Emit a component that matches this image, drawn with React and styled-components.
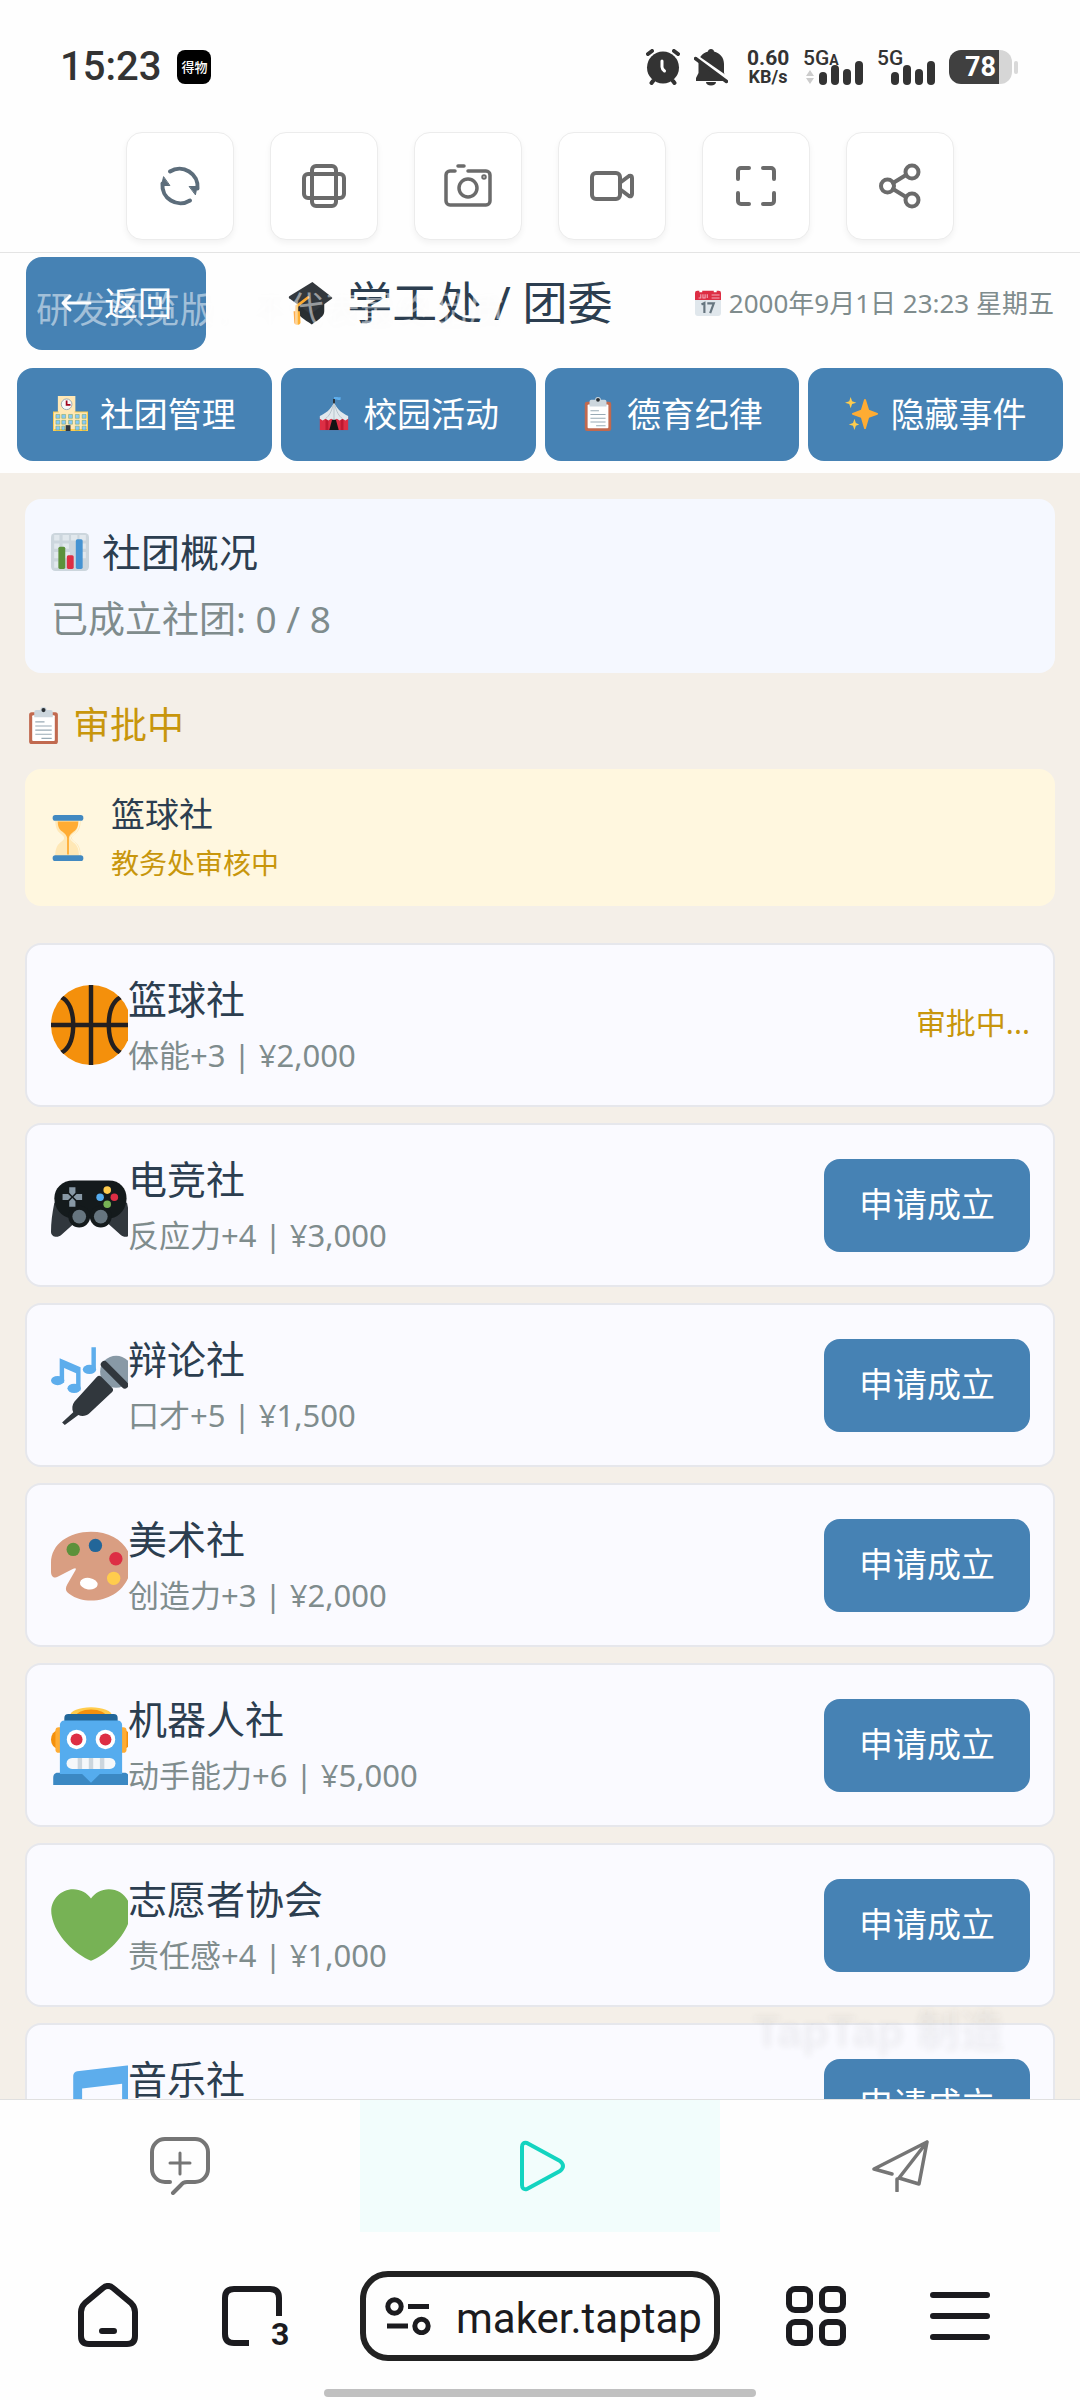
import React from 'react';
import styled, { createGlobalStyle } from 'styled-components';

const GlobalStyle = createGlobalStyle`
  *, *::before, *::after { box-sizing: border-box; }
  body { margin: 0; background: #fff; }
  button, input { font: inherit; }
  button { margin: 0; padding: 0; border: 0; background: none; color: inherit; cursor: pointer; }
  h1, h2, h3, p { margin: 0; font-weight: 400; }
  svg { display: block; flex: none; }
`;

const cjk = '"Noto Sans", "Noto Sans CJK SC", sans-serif';
const latin = 'Roboto, "Noto Sans CJK SC", sans-serif';

const Page = styled.div`
  display: flex;
  flex-direction: column;
  height: 100vh;
  overflow: hidden;
  background: #fefefe;
  font-family: ${cjk};
`;

/* ---------- system status bar ---------- */

const StatusBar = styled.div`
  display: flex;
  align-items: center;
  justify-content: space-between;
  flex: none;
  height: 132px;
  padding: 2px 62px 0 60px;
  color: #333;
  font-family: ${latin};
`;
const StatusGroup = styled.div`
  display: flex;
  align-items: center;
  gap: ${(p) => p.$gap}px;
`;
const Clock = styled.time`
  font-size: 40px;
  line-height: 44px;
  font-weight: 500;
`;
const AppBadge = styled.span`
  width: 34px;
  height: 34px;
  border-radius: 8px;
  background: #000;
  color: #fff;
  font: 500 13px/34px ${cjk};
  text-align: center;
`;
const Speed = styled.div`
  width: 42px;
  margin-left: 5px;
  text-align: center;
  font-weight: 700;
  font-size: 18px;
  line-height: 18px;
`;
const SpeedValue = styled.div`
  font-size: 21px;
  line-height: 19px;
`;
const Signal = styled.div`
  position: relative;
  width: ${(p) => p.$width}px;
  height: 36px;
`;
const SignalName = styled.span`
  position: absolute;
  top: -2px;
  left: 0;
  font-size: 21px;
  line-height: 22px;
  font-weight: 500;
  small { font-size: 14px; font-weight: 700; }
`;
const SignalBars = styled.svg`
  position: absolute;
  right: 0;
  bottom: 0;
`;
const Battery = styled.div`
  display: flex;
  align-items: center;
  gap: 2px;
  &::after {
    content: '';
    width: 4px;
    height: 13px;
    border-radius: 2px;
    background: #d9d9d9;
  }
`;
const BatteryBody = styled.span`
  width: 63px;
  height: 34px;
  padding-left: 16px;
  border-radius: 12px;
  background: linear-gradient(90deg, #404040 50px, #d6d6d6 50px);
  color: #fff;
  font-size: 27px;
  line-height: 34px;
  font-weight: 700;
`;

/* ---------- tool strip ---------- */

const Toolbar = styled.div`
  display: flex;
  justify-content: center;
  gap: 36px;
  flex: none;
  padding-bottom: 12px;
  border-bottom: 1px solid #e4e4e4;
`;
const ToolButton = styled.button`
  display: grid;
  place-items: center;
  width: 108px;
  height: 108px;
  border: 1px solid #ececec;
  border-radius: 16px;
  background: #fff;
  box-shadow: 0 3px 6px rgba(0, 0, 0, 0.05);
  color: ${(p) => p.$color || '#6b6b6b'};
`;

/* ---------- game screen ---------- */

const Game = styled.main`
  position: relative;
  display: flex;
  flex-direction: column;
  flex: 1;
  min-height: 0;
  background: #f4efe8;
`;
const GameHeader = styled.header`
  flex: none;
  padding-bottom: 12px;
  background: #fefefe;
`;
const TitleRow = styled.div`
  display: flex;
  align-items: center;
  justify-content: space-between;
  padding: 4px 26px 18px;
`;
const BlueButton = styled.button`
  display: flex;
  align-items: center;
  justify-content: center;
  gap: 12px;
  height: 93px;
  padding-bottom: 2px;
  border-radius: 16px;
  background: #4682b4;
  color: #fff;
  font-size: 34px;
  line-height: 48px;
`;
const BackButton = styled(BlueButton)`
  width: 180px;
`;
const ApplyButton = styled(BlueButton)`
  width: 206px;
  flex: none;
`;
const Title = styled.h1`
  display: flex;
  align-items: center;
  gap: 14px;
  padding-bottom: 2px;
  color: #2c3e50;
  font-size: 45px;
  line-height: 60px;
`;
const DateText = styled.div`
  display: flex;
  align-items: center;
  gap: 8px;
  padding-bottom: 2px;
  color: #7f8c8d;
  font-size: 26px;
  line-height: 36px;
`;
const Nav = styled.nav`
  display: grid;
  grid-template-columns: repeat(4, 1fr);
  gap: 9px;
  padding: 0 17px;
`;
const Scroll = styled.div`
  flex: 1;
  min-height: 0;
  overflow-y: auto;
  scrollbar-width: none;
  padding: 26px 25px 0;
`;
const Summary = styled.section`
  padding: 25px 26px;
  height: 174px;
  border-radius: 16px;
  background: #f5f8ff;
`;
const SummaryTitle = styled.h2`
  display: flex;
  align-items: center;
  gap: 13px;
  color: #2c3e50;
  font-size: 39px;
  line-height: 56px;
`;
const SummaryText = styled.p`
  margin-top: 12px;
  color: #7f8c8d;
  font-size: 37px;
  line-height: 54px;
`;
const SectionTitle = styled.h2`
  display: flex;
  align-items: center;
  gap: 11px;
  margin: 28px 0 20px;
  color: #c8960c;
  font-size: 37px;
  line-height: 48px;
`;
const Pending = styled.section`
  display: flex;
  align-items: center;
  gap: 26px;
  height: 137px;
  margin-bottom: 37px;
  padding: 0 26px;
  border-radius: 16px;
  background: #fff7df;
`;
const PendingName = styled.h3`
  color: #2c3e50;
  font-size: 34px;
  line-height: 50px;
`;
const PendingState = styled.p`
  color: #c8960c;
  font-size: 28px;
  line-height: 48px;
`;
const ClubList = styled.ul`
  display: grid;
  gap: 16px;
  margin: 0;
  padding: 0;
  list-style: none;
`;
const Club = styled.li`
  display: flex;
  align-items: center;
  height: 164px;
  padding: 0 23px 0 24px;
  border: 2px solid #e6e7ec;
  border-radius: 16px;
  background: #fafaff;
`;
const ClubIcon = styled.div`
  flex: none;
  width: 77px;
  overflow: hidden;
`;
const ClubBody = styled.div`
  flex: 1;
  padding-top: 2px;
`;
const ClubName = styled.h3`
  color: #2c3e50;
  font-size: 39px;
  line-height: 52px;
`;
const ClubDetail = styled.p`
  min-height: 54px;
  padding-top: 6px;
  color: #7f8c8d;
  font-size: 31px;
  line-height: 48px;
`;
const ClubState = styled.span`
  padding-bottom: 4px;
  color: #c8960c;
  font-size: 30px;
  line-height: 48px;
`;
const Notice = styled.div`
  position: absolute;
  top: 30px;
  left: 36px;
  color: rgba(255, 255, 255, 0.5);
  font-size: 36px;
  line-height: 54px;
  white-space: nowrap;
  text-shadow: 0 2px 8px rgba(0, 0, 0, 0.02);
  pointer-events: none;
`;
const Brand = styled.div`
  position: absolute;
  right: 76px;
  bottom: 40px;
  color: rgba(255, 255, 255, 0.15);
  font: 700 44px/54px "Liberation Sans", ${cjk};
  text-shadow: 0 0 6px rgba(0, 0, 0, 0.06);
  pointer-events: none;
`;

/* ---------- bottom bars ---------- */

const TabBar = styled.nav`
  display: grid;
  grid-template-columns: repeat(3, 1fr);
  flex: none;
  height: 133px;
  border-top: 1px solid #e0e0e0;
`;
const TabButton = styled.button`
  display: grid;
  place-items: center;
  color: ${(p) => (p.$active ? '#14d4c0' : '#757575')};
  background: ${(p) => (p.$active ? '#f2fdfc' : 'transparent')};
`;
const BrowserBar = styled.div`
  display: flex;
  align-items: center;
  flex: none;
  padding: 39px 48px 28px 36px;
  color: #1b1b1f;
`;
const BrowserButton = styled.button`
  position: relative;
  display: grid;
  place-items: center;
  width: 144px;
  height: 90px;
`;
const TabCount = styled.span`
  position: absolute;
  left: 91px;
  top: 45px;
  font: 700 32px/36px ${latin};
`;
const Address = styled.label`
  display: flex;
  align-items: center;
  gap: 25px;
  flex: 1;
  min-width: 0;
  height: 90px;
  margin: 0 24px 0 36px;
  padding: 0 8px 0 19px;
  border: 6px solid #222;
  border-radius: 28px;
`;
const AddressInput = styled.input`
  flex: 1;
  min-width: 0;
  width: 100%;
  padding: 6px 0 0;
  border: 0;
  outline: 0;
  background: transparent;
  color: #1b1b1f;
  font: 400 42px/60px ${latin};
`;
const HomeIndicator = styled.div`
  flex: none;
  width: 40%;
  height: 8px;
  margin: 0 auto 3px;
  border-radius: 4px;
  background: #c0c0c0;
`;

/* ---------- drawings ---------- */

const Emoji = ({ size, width, box = '0 0 36 36', children }) => (
  <svg width={width || size} height={size} viewBox={box} aria-hidden="true">{children}</svg>
);

const Clipboard = ({ size }) => (
  <Emoji size={size}>
    <rect x="4" y="5" width="28" height="31" rx="2.5" fill="#c1694f" />
    <rect x="7" y="8" width="22" height="25" rx="1" fill="#fff" />
    <path fill="#ccd6dd" d="M25 3h-4a3 3 0 1 0-6 0h-4a2 2 0 0 0-2 2v5h18V5a2 2 0 0 0-2-2z" />
    <circle cx="18" cy="3" r="2" fill="#292f33" />
    <path stroke="#99aab5" strokeWidth="1.1" d="M10 14.500h9M10 18.500h16M10 22.500h16M10 26.500h16M16 30.500h10" />
  </Emoji>
);
const Cap = () => (
  <Emoji size={45}>
    <path fill="#292f33" d="M8 17v8c0 4 5 6.500 11 10.500 6-4 10-6.500 10-10.500v-8z" />
    <path fill="#33383d" d="M19.500 1.500 1 13a1 1 0 0 0 0 1.500L17 26.500a2 2 0 0 0 2 0L35 15a1 1 0 0 0 0-1.500z" />
    <path fill="none" stroke="#ffac33" strokeWidth="2.200" strokeLinecap="round" d="M16 14 7 21v6" />
    <path fill="#ffac33" d="M4.500 25h5l.5 9c0 2.500-5 2.500-5 0z" />
  </Emoji>
);
const Calendar = () => (
  <Emoji size={26}>
    <path fill="#e0e7ec" d="M36 32a4 4 0 0 1-4 4H4a4 4 0 0 1-4-4V9h36z" />
    <path fill="#dd2e44" d="M0 4a3 3 0 0 1 3-3h3v2h4V1h16v2h4V1h3a3 3 0 0 1 3 3v10H0z" />
    <path stroke="#f4abba" strokeWidth="1.500" d="M5 11h3V6m3 0v5h3V6m3 0v5M23 7h11M23 11h11" fill="none" />
    <path fill="none" stroke="#66757f" strokeWidth="3" d="m9 20 4-2v14M17 18.500h9l-5 13.500" />
  </Emoji>
);
const School = () => (
  <Emoji size={35}>
    <path fill="#ffe8b6" d="M5 0h18v36H5z" />
    <path fill="#ffcc4d" d="M0 16h36v20H0z" />
    <path fill="#ffe8b6" d="M1 17h34v17H1z" />
    <path fill="#ffe8b6" d="M6 3h16v16H6z" />
    <circle cx="14" cy="8.500" r="5.500" fill="#f5f8fa" stroke="#99aab5" strokeWidth="1" />
    <path d="M14 4.500v4.500h4" stroke="#a0041e" strokeWidth="1.800" fill="none" />
    <path fill="#88c9f9" stroke="#5c913b" strokeWidth=".4" d="M3 19h4v4H3zM9 19h4v4H9zM16 19h4v4h-4zM23 19h4v4h-4zM30 19h4v4h-4zM3 25h4v4H3zM9 25h4v4H9zM16 25h4v4h-4zM23 25h4v4h-4zM30 25h4v4h-4zM3 31h4v4H3zM9 31h3v4H9zM23 31h4v4h-4zM30 31h4v4h-4z" />
    <path fill="#31373d" d="M13 30h5v6h-5z" />
  </Emoji>
);
const Tent = () => (
  <Emoji size={34}>
    <path fill="#5dadec" d="M18 0c3-1 4 1 7 0v3c-3 1-4-1-7 0z" />
    <path stroke="#292f33" strokeWidth="2" d="M18 2v6" />
    <path fill="#dd2e44" d="M3 22h30v13H3z" />
    <path fill="#be1931" d="M9 23h3v12H9zM25 23h3v12h-3z" />
    <path fill="#e1e8ed" d="M18 6C14 14 9 17 3 20v3l3 2 3-2 3 2 3-2 3 2 3-2 3 2 3-2 3 2 3-2v-3C27 17 22 14 18 6z" />
    <path fill="none" stroke="#aab8c2" strokeWidth=".8" d="M18 7v17M17 9c-2 7-4 11-8 14M19 9c2 7 4 11 8 14" />
    <path fill="#141414" d="M16 24h4l3 11H13z" />
  </Emoji>
);
const Sparkles = () => (
  <Emoji size={34}>
    <path fill="#ffac33" d="M34.347 16.893l-8.899-3.294-3.323-10.891c-.128-.42-.517-.708-.956-.708-.439 0-.828.288-.956.708l-3.322 10.891-8.900 3.294c-.393.146-.653.519-.653.938 0 .418.260.793.653.938l8.895 3.293 3.324 11.223c.126.424.516.715.959.715.442 0 .833-.291.959-.716l3.324-11.223 8.896-3.293c.391-.144.652-.518.652-.937 0-.418-.261-.792-.653-.938z" />
    <path fill="#ffcc4d" d="m6 0 1.500 4.500L12 6 7.500 7.500 6 12 4.500 7.500 0 6l4.500-1.500zM10 23l1.500 4.500L15 29l-3.500 1.500L10 35l-1.500-4.500L4 29l4.500-1.500z" />
  </Emoji>
);
const Chart = () => (
  <Emoji size={38}>
    <rect width="36" height="36" rx="4" fill="#ccd6dd" />
    <path fill="#e1e8ed" d="M3 2h5v5H3zM11 2h6v5h-6zM19 2h6v5h-6zM27 2h6v5h-6zM3 10h5v5H3zM11 10h6v5h-6zM27 10h6v5h-6zM3 18h5v6H3zM13 18h5v6h-5zM29 18h4v6h-4zM3 27h4v6H3z" />
    <rect x="7" y="13" width="6.500" height="21" rx="1.500" fill="#5c913b" />
    <rect x="15" y="21" width="6.500" height="13" rx="1.500" fill="#dd2e44" />
    <rect x="23.500" y="6" width="6.500" height="28" rx="1.500" fill="#4593d2" />
  </Emoji>
);
const Hourglass = () => (
  <Emoji size={46} width={34} box="4.700 0 26.600 36">
    <path fill="#ffe8b6" d="M8 3h20c0 6-1 9-4 11.500-2 1.500-3 2.500-3 3.500s1 2 3 3.500c3 2.500 4 5.500 4 11.500H8c0-6 1-9 4-11.500 2-1.500 3-2.500 3-3.500s-1-2-3-3.500C9 12 8 9 8 3z" />
    <path fill="#ffac33" d="M10 5h16c0 4-1 6-3.500 8S19 16 18.700 18v13h-1.400V18c-.3-2-1.300-3-3.800-5S10 9 10 5z" />
    <path fill="none" stroke="#fff7df" strokeWidth=".8" d="M27 4c0 5-1 8-4 10.500-2 1.500-3 2.500-3 3.500s1 2 3 3.500c3 2.500 4 5.500 4 10" />
    <rect x="6" y="0" width="24" height="4.500" rx="2" fill="#4289c1" />
    <rect x="6" y="31.500" width="24" height="4.500" rx="2" fill="#4289c1" />
  </Emoji>
);

const Basketball = () => (
  <Emoji size={80}>
    <circle cx="18" cy="18" r="18" fill="#f4900c" />
    <path fill="#231f20" d="M36 17h-8.981c.188-5.506 1.943-9.295 4.784-10.546-.445-.531-.926-1.027-1.428-1.504-2.830 1.578-5.145 5.273-5.354 12.050H19V0h-2v17h-6.021C10.770 10.223 8.456 6.528 5.625 4.950c-.502.476-.984.972-1.428 1.503C7.039 7.705 8.793 11.494 8.981 17H0v2h8.981c-.188 5.506-1.942 9.295-4.784 10.546.445.531.926 1.027 1.428 1.504 2.831-1.578 5.145-5.273 5.354-12.050H17v17h2V19h6.021c.209 6.776 2.523 10.471 5.354 12.050.502-.476.984-.973 1.428-1.504-2.841-1.251-4.596-5.040-4.784-10.546H36v-2z" />
  </Emoji>
);
const Gamepad = () => (
  <Emoji size={80}>
    <path fill="#31373d" d="M1.500 17C.5 22 0 26 0 30c0 2.400 3 3 4.600 1.500L13 24V15zM34.200 17c1 5 1.800 9 1.800 13 0 2.400-3 3-4.600 1.500L23 24V15z" />
    <path fill="#141a1c" d="M10 7h16c5 0 8 3.500 8 8 0 4.600-3 8.400-7 9H9c-4.500-.6-7.500-4.400-7.500-9 0-4.500 3.500-8 8.500-8z" />
    <circle cx="12.700" cy="23.200" r="4.900" fill="#141a1c" />
    <circle cx="22.400" cy="23.200" r="4.900" fill="#141a1c" />
    <circle cx="12.700" cy="23.200" r="3.100" fill="#66757f" />
    <circle cx="22.400" cy="23.200" r="3.100" fill="#66757f" />
    <path fill="#8899a6" d="M8.200 10h2.800v2.500l-1.400 1.400-1.400-1.400zM8.200 18.800H11v-2.500l-1.400-1.400-1.400 1.400zM5.200 13v2.800h2.500l1.400-1.400L7.700 13zM14 13v2.800h-2.500l-1.400-1.400 1.400-1.400z" />
    <circle cx="25.300" cy="11.300" r="1.700" fill="#ffcc4d" />
    <circle cx="22.100" cy="14.500" r="1.700" fill="#55acee" />
    <circle cx="28.500" cy="14.500" r="1.700" fill="#dd2e44" />
    <circle cx="25.300" cy="17.700" r="1.700" fill="#77b255" />
  </Emoji>
);
const Microphone = () => (
  <Emoji size={80}>
    <g fill="#5dadec">
      <path d="M18.200 1h2v10.500h-2zM3.900 6l9.400 4v10.500h-2v-7.800l-5.400-2.300V17h-2z" />
      <ellipse cx="17.300" cy="11" rx="3" ry="2.100" />
      <ellipse cx="3" cy="16" rx="3" ry="2.100" />
      <ellipse cx="10.400" cy="19.500" rx="3" ry="2.100" />
    </g>
    <circle cx="29.300" cy="12" r="7.200" fill="#8899a6" />
    <path stroke="#31373d" strokeWidth="3.200" strokeLinecap="round" d="m24 8.800 9.200 9.200" />
    <path fill="#31373d" d="M20.700 14.300c.6-.6 1.300-.6 1.900 0l4.900 4.900c.6.600.6 1.300 0 1.900l-10.200 9.600c-1.400 1.300-3.400 1.600-5 .8L6.200 36l-1.200-1.100 5-4.600c-.7-1.600-.5-3.500.6-4.900z" />
  </Emoji>
);
const Palette = () => (
  <Emoji size={80}>
    <path fill="#d99e82" d="M18 3C8 3 0 8.600 0 17v4c0 2.200 1.500 3.200 3 2.300l7-3.600c1-.5 1.500-.2 1 .7l-3.700 6.400c-1 1.800-.8 3.200 1 4.200C11 33 14.500 34 18 34c10 0 18-7 18-16.500C36 9 28 3 18 3z" />
    <ellipse cx="17" cy="26.400" rx="4" ry="2.600" transform="rotate(8 17 26.400)" fill="#fff" />
    <circle cx="10" cy="11" r="3" fill="#5c913b" />
    <circle cx="20" cy="9.200" r="3" fill="#226699" />
    <circle cx="29.200" cy="15.200" r="3" fill="#dd2e44" />
    <circle cx="28.200" cy="24" r="3" fill="#ffcc4d" />
  </Emoji>
);
const Robot = () => (
  <Emoji size={80}>
    <ellipse cx="18" cy="5" rx="9.500" ry="4" fill="#ffcc4d" />
    <ellipse cx="18" cy="5.500" rx="7" ry="3.500" fill="#f4900c" />
    <ellipse cx="3" cy="15.500" rx="3" ry="4" fill="#f4900c" />
    <ellipse cx="33" cy="15.500" rx="3" ry="4" fill="#f4900c" />
    <rect x="2" y="10" width="4" height="11.500" rx="1.500" fill="#ffac33" />
    <rect x="30" y="10" width="4" height="11.500" rx="1.500" fill="#ffac33" />
    <rect x="6" y="4" width="24" height="8" rx="1.800" fill="#226699" />
    <path fill="#3b88c3" d="M1 33c0-1.500.5-2.500 2-2.500h30c1.500 0 2 1 2 2.500v3H1z" />
    <path fill="#55acee" d="M6 7h24a2 2 0 0 1 2 2v22h-10l-4 4-4-4H4V9a2 2 0 0 1 2-2z" />
    <circle cx="11.500" cy="15.500" r="4.400" fill="#fff" />
    <circle cx="24.500" cy="15.500" r="4.400" fill="#fff" />
    <circle cx="11.500" cy="15.500" r="2.700" fill="#dd2e44" />
    <circle cx="24.500" cy="15.500" r="2.700" fill="#dd2e44" />
    <rect x="7" y="23.800" width="22" height="5" rx="2.500" fill="#f5f8fa" />
    <path fill="#ccd6dd" d="M12 23.800h2v5h-2zM17 23.800h2v5h-2zM22 23.800h2v5h-2z" />
  </Emoji>
);
const Heart = () => (
  <Emoji size={80}>
    <path fill="#77b255" d="M35.885 11.833c0-5.450-4.418-9.868-9.867-9.868-3.308 0-6.227 1.633-8.018 4.129-1.791-2.496-4.710-4.129-8.017-4.129-5.450 0-9.868 4.417-9.868 9.868 0 .772.098 1.520.266 2.241C1.751 22.587 11.216 31.568 18 34.034c6.783-2.466 16.249-11.447 17.617-19.959.170-.721.268-1.469.268-2.242z" />
  </Emoji>
);
const Note = () => (
  <Emoji size={80}>
    <path fill="#5dadec" d="M34.209.206L11.791 2.793C10.806 2.907 10 3.811 10 4.803v18.782C9.090 23.214 8.075 23 7 23c-3.865 0-7 2.685-7 6 0 3.314 3.135 6 7 6s7-2.686 7-6V10.539l18-2.077v13.124c-.910-.372-1.925-.586-3-.586-3.865 0-7 2.685-7 6 0 3.314 3.135 6 7 6s7-2.686 7-6V1.803c0-.992-.806-1.710-1.791-1.597z" />
  </Emoji>
);

const Line = ({ w, h, sw = 3, children }) => (
  <svg width={w} height={h} viewBox={`0 0 ${w} ${h}`} fill="none" stroke="currentColor"
    strokeWidth={sw} strokeLinecap="round" strokeLinejoin="round" aria-hidden="true">{children}</svg>
);

const tools = [
  { label: '刷新', color: '#5c6d7b', icon: (
    <Line w={44} h={44} sw={4}>
      <path d="M12 7.500a18 18 0 0 1 27.500 17M32 36.500A18 18 0 0 1 4.500 19.500" />
      <path d="M31.500 22.500h7.500l-1.500 8zM5.500 13l-2 8.500h8z" fill="currentColor" strokeWidth="1" />
    </Line>) },
  { label: '旋转', icon: (
    <Line w={44} h={44} sw={4}>
      <rect x="10" y="2" width="24" height="40" rx="4" /><rect x="2" y="10" width="40" height="24" rx="4" />
    </Line>) },
  { label: '截图', icon: (
    <Line w={48} h={46} sw={3.5}>
      <path d="M11 8H6a4 4 0 0 0-4 4v26a4 4 0 0 0 4 4h36a4 4 0 0 0 4-4V12a4 4 0 0 0-4-4H24M14 3h6" />
      <circle cx="24" cy="25" r="9" /><circle cx="40" cy="14" r="1" />
    </Line>) },
  { label: '录像', icon: (
    <Line w={44} h={30} sw={4}>
      <rect x="2" y="2" width="28" height="26" rx="4" /><path d="m31 11 8-6q3-1 3 2v16q0 3-3 2l-8-6" />
    </Line>) },
  { label: '全屏', icon: (
    <Line w={42} h={42} sw={4}>
      <path d="M3 14V6a3 3 0 0 1 3-3h8M28 3h8a3 3 0 0 1 3 3v8M39 28v8a3 3 0 0 1-3 3h-8M14 39H6a3 3 0 0 1-3-3v-8" />
    </Line>) },
  { label: '分享', icon: (
    <Line w={42} h={46} sw={4}>
      <circle cx="8.500" cy="23" r="6.500" /><circle cx="33" cy="9" r="6.500" /><circle cx="33" cy="37" r="6.500" />
      <path d="m14 20 13-8M14 26l13 8" />
    </Line>) },
];

const sections = [
  ['社团管理', <School />],
  ['校园活动', <Tent />],
  ['德育纪律', <Clipboard size={34} />],
  ['隐藏事件', <Sparkles />],
];

const clubs = [
  { name: '篮球社', detail: '体能+3 | ¥2,000', icon: <Basketball />, pending: true },
  { name: '电竞社', detail: '反应力+4 | ¥3,000', icon: <Gamepad /> },
  { name: '辩论社', detail: '口才+5 | ¥1,500', icon: <Microphone /> },
  { name: '美术社', detail: '创造力+3 | ¥2,000', icon: <Palette /> },
  { name: '机器人社', detail: '动手能力+6 | ¥5,000', icon: <Robot /> },
  { name: '志愿者协会', detail: '责任感+4 | ¥1,000', icon: <Heart /> },
  { name: '音乐社', icon: <Note /> },
];

const Bars = () => (
  <SignalBars width="44" height="24" viewBox="0 0 44 24" fill="#333">
    <rect x="0" y="11" width="8" height="13" rx="4" />
    <rect x="12" y="4" width="8" height="20" rx="4" />
    <rect x="24" y="8" width="8" height="16" rx="4" />
    <rect x="36" y="0" width="8" height="24" rx="4" />
  </SignalBars>
);

export default function App() {
  return (
    <Page>
      <GlobalStyle />
      <StatusBar>
        <StatusGroup $gap={16}>
          <Clock>15:23</Clock>
          <AppBadge>得物</AppBadge>
        </StatusGroup>
        <StatusGroup $gap={14}>
          <svg width="34" height="36" viewBox="0 0 34 36" aria-label="闹钟">
            <circle cx="17" cy="18.500" r="16" fill="#333" />
            <path d="m2 5 4-3M32 5l-4-3M7 32l-1.500 2M27 32l1.500 2" stroke="#333" strokeWidth="4" strokeLinecap="round" />
            <path d="M16 12v6q0 2 2.500 4" fill="none" stroke="#fff" strokeWidth="3" strokeLinecap="round" />
          </svg>
          <svg width="34" height="38" viewBox="0 0 34 38" aria-label="静音">
            <path fill="#333" d="M17 1c1.700 0 3 1 3 2.500 6 1.500 10 6 10 12.500v9l2.500 5V33H2v-3l2.500-5v-9C4.500 9.500 8 5 14 3.500 14 2 15.300 1 17 1zM12 34h10c0 2-2 3.500-5 3.500S12 36 12 34z" />
            <path d="M1 8l33 23" stroke="#fefefe" strokeWidth="4" />
            <path d="M1.500 10.500 32.500 33.500" stroke="#333" strokeWidth="3.500" strokeLinecap="round" />
          </svg>
          <Speed><SpeedValue>0.60</SpeedValue>KB/s</Speed>
          <Signal $width={60}>
            <SignalName>5G<small>A</small></SignalName>
            <SignalBars as="svg" width="60" height="24" viewBox="0 0 60 24">
              <path fill="#ccc" d="m7 9 4 6H3zM7 23l4-6H3z" />
            </SignalBars>
            <Bars />
          </Signal>
          <Signal $width={58}>
            <SignalName>5G</SignalName>
            <Bars />
          </Signal>
          <Battery><BatteryBody>78</BatteryBody></Battery>
        </StatusGroup>
      </StatusBar>

      <Toolbar>
        {tools.map((t) => (
          <ToolButton key={t.label} aria-label={t.label} $color={t.color}>{t.icon}</ToolButton>
        ))}
      </Toolbar>

      <Game>
        <GameHeader>
          <TitleRow>
            <BackButton>
              <Line w={32} h={20} sw={3}><path d="M30 10H3M10 3l-7 7 7 7" /></Line>
              返回
            </BackButton>
            <Title><Cap />学工处 / 团委</Title>
            <DateText><Calendar />2000年9月1日 23:23 星期五</DateText>
          </TitleRow>
          <Nav>
            {sections.map(([label, icon]) => <BlueButton key={label}>{icon}{label}</BlueButton>)}
          </Nav>
        </GameHeader>

        <Scroll>
          <Summary>
            <SummaryTitle><Chart />社团概况</SummaryTitle>
            <SummaryText>已成立社团: 0 / 8</SummaryText>
          </Summary>

          <SectionTitle><Clipboard size={37} />审批中</SectionTitle>
          <Pending>
            <Hourglass />
            <div>
              <PendingName>篮球社</PendingName>
              <PendingState>教务处审核中</PendingState>
            </div>
          </Pending>

          <ClubList>
            {clubs.map((c) => (
              <Club key={c.name}>
                <ClubIcon>{c.icon}</ClubIcon>
                <ClubBody>
                  <ClubName>{c.name}</ClubName>
                  <ClubDetail>{c.detail}</ClubDetail>
                </ClubBody>
                {c.pending ? <ClubState>审批中...</ClubState> : <ApplyButton>申请成立</ApplyButton>}
              </Club>
            ))}
          </ClubList>
        </Scroll>

        <Notice>研发预览版，不代表最终品质</Notice>
        <Brand>TapTap 制造</Brand>
      </Game>

      <TabBar>
        <TabButton aria-label="对话">
          <Line w={60} h={58} sw={4}>
            <path d="M20 45h-5A13 13 0 0 1 2 32V15A13 13 0 0 1 15 2h30a13 13 0 0 1 13 13v17a13 13 0 0 1-13 13H37q-4 0-6 3l-8 8" />
            <path d="M30 16v21M20 26h20" strokeWidth="3" />
          </Line>
        </TabButton>
        <TabButton aria-label="运行" $active>
          <Line w={50} h={52} sw={4}>
            <path d="M7 7v38q0 5 5 4l33-18q6-5 0-10L12 3Q7 2 7 7z" />
          </Line>
        </TabButton>
        <TabButton aria-label="发布">
          <Line w={58} h={52} sw={3.5}>
            <path d="M21 34 3 29 56 2l-8 42-20-6 28-36M26 39v12" />
          </Line>
        </TabButton>
      </TabBar>

      <BrowserBar>
        <BrowserButton aria-label="主页">
          <Line w={62} h={66} sw={6}>
            <path d="M26 5q5-4 10 0l18 15q4 4 4 9v24q0 8-8 8H12q-8 0-8-8V29q0-5 4-9zM25 48h12" />
          </Line>
        </BrowserButton>
        <BrowserButton aria-label="标签页">
          <svg width="60" height="60" viewBox="0 0 60 60" fill="none" stroke="currentColor" strokeWidth="6">
            <path d="M57 30V12q0-9-9-9H12q-9 0-9 9v36q0 9 9 9h15" />
          </svg>
          <TabCount>3</TabCount>
        </BrowserButton>
        <Address>
          <Line w={46} h={38} sw={5}>
            <circle cx="9.500" cy="9.500" r="6.700" /><circle cx="36.500" cy="29" r="6.700" />
            <path d="M23 9.500h21M2 29h21" strokeLinecap="butt" />
          </Line>
          <AddressInput aria-label="网址" defaultValue="maker.taptap" />
        </Address>
        <BrowserButton aria-label="应用">
          <Line w={60} h={60} sw={6}>
            <rect x="3" y="3" width="21" height="21" rx="6" /><rect x="36" y="3" width="21" height="21" rx="6" />
            <rect x="3" y="36" width="21" height="21" rx="6" /><rect x="36" y="36" width="21" height="21" rx="6" />
          </Line>
        </BrowserButton>
        <BrowserButton aria-label="菜单">
          <Line w={60} h={48} sw={6}><path d="M3 3h54M3 24h54M3 45h54" /></Line>
        </BrowserButton>
      </BrowserBar>
      <HomeIndicator />
    </Page>
  );
}
